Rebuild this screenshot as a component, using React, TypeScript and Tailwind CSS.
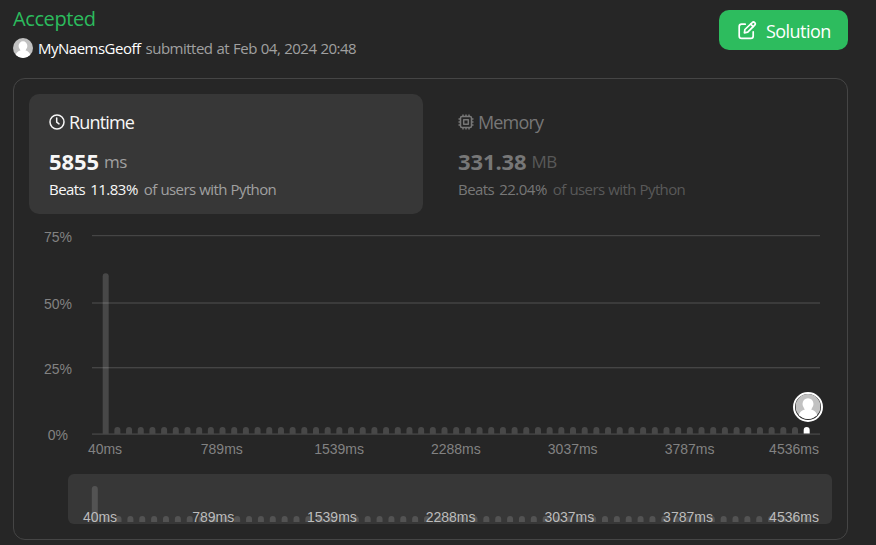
import React from "react";

const TICKS = ["40ms", "789ms", "1539ms", "2288ms", "3037ms", "3787ms", "4536ms"];
const BUCKETS = Array.from({ length: 61 }, (_, i) => i);

function Avatar({ className }: { className: string }) {
  return (
    <svg viewBox="0 0 20 20" className={className}>
      <defs>
        <clipPath id="avatar-clip">
          <circle cx="10" cy="10" r="10" />
        </clipPath>
      </defs>
      <g clipPath="url(#avatar-clip)">
        <rect width="20" height="20" fill="#c1c1c1" />
        <ellipse cx="10" cy="8" rx="4.4" ry="4.700" fill="#fff" />
        <path d="M2.200 20c0-5 2.600-6.800 5.200-7.600V10h5.200v2.400c2.600.8 5.200 2.600 5.200 7.600z" fill="#fff" />
      </g>
    </svg>
  );
}

function EditIcon() {
  return (
    <svg viewBox="0 0 20 20" className="h-5 w-5" fill="none" stroke="currentColor" strokeWidth="1.7" strokeLinecap="round" strokeLinejoin="round">
      <path d="M8.200 4.200H4.600A2.400 2.400 0 0 0 2.200 6.600V16A2.400 2.400 0 0 0 4.600 18.400h9.200a2.400 2.400 0 0 0 2.400-2.400V11.800" />
      <path d="M7.400 12.900l.5-3.400L15.200 2.600a1.750 1.750 0 0 1 2.500 2.500L10.700 12.200z" />
      <path d="M13.700 4.200l2.400 2.400" />
    </svg>
  );
}

function ClockIcon() {
  return (
    <svg viewBox="0 0 16 16" className="h-4 w-4" fill="none" stroke="currentColor" strokeWidth="1.500" strokeLinecap="round" strokeLinejoin="round">
      <circle cx="8" cy="8" r="7" />
      <path d="M7.700 4.100v4.100l2.300 1.700" />
    </svg>
  );
}

function ChipIcon() {
  return (
    <svg viewBox="0 0 16 16" className="h-4 w-4" fill="none" stroke="currentColor" strokeWidth="1.500" strokeLinejoin="round">
      <rect x="2.500" y="2.500" width="11" height="11" rx="1.500" />
      <rect x="5.700" y="5.700" width="4.600" height="4.600" />
      <path d="M5 2.500V.5M8 2.500V.5M11 2.500V.5M5 15.500v-2M8 15.500v-2M11 15.500v-2M.5 5h2M.5 8h2M.5 11h2M13.500 5h2M13.500 8h2M13.500 11h2" />
    </svg>
  );
}

const bar = (cx: number, top: number, bottom: number) =>
  `M${cx - 3} ${bottom}V${top + 3}a3 3 0 0 1 6 0V${bottom}z`;

function Distribution() {
  return (
    <svg viewBox="0 0 818 246" className="block h-[246px] w-[818px] font-['Liberation_Sans',sans-serif] text-[14px]">
      <g fill="#454545">
        <rect x="78" y="21" width="728" height="1.200" />
        <rect x="78" y="88.300" width="728" height="1.400" />
        <rect x="78" y="153" width="728" height="1.400" />
        <rect x="78" y="219.400" width="728" height="1.400" />
      </g>
      <g fill="#828282" textAnchor="end">
        <text x="58" y="28">75%</text>
        <text x="58" y="95">50%</text>
        <text x="58" y="160">25%</text>
        <text x="54" y="226">0%</text>
      </g>
      {BUCKETS.map((i) => (
        <path
          key={i}
          d={bar(91.7 + i * 11.683, i === 0 ? 59.3 : 213, 219.6)}
          fill="#fff"
          fillOpacity={i === 60 ? 1 : 0.16}
        />
      ))}
      <g fill="#828282" textAnchor="middle">
        {TICKS.map((t, i) => (
          <text key={t} x={i === 6 ? 780 : i < 2 ? 91 + i * 116.8 : 91.4 + i * 116.83} y="240">
            {t}
          </text>
        ))}
      </g>
    </svg>
  );
}

function RangePreview() {
  return (
    <svg viewBox="0 0 764 50" className="block h-[50px] w-[764px] font-['Liberation_Sans',sans-serif] text-[14px]">
      <rect width="764" height="50" rx="6" fill="#373737" />
      {BUCKETS.map((i) => (
        <path key={i} d={bar(26.8 + i * 11.865, i === 0 ? 12 : 42, 48)} fill="#535353" />
      ))}
      <g fill="#bcbcbc" textAnchor="middle">
        {TICKS.map((t, i) => (
          <text key={t} x={i === 0 ? 32 : i === 6 ? 726 : 26.5 + i * 118.7} y="48">
            {t}
          </text>
        ))}
      </g>
    </svg>
  );
}

type StatProps = {
  icon: React.ReactNode;
  title: string;
  value: string;
  unit: string;
  beats: string;
  active?: boolean;
};

function Stat({ icon, title, value, unit, beats, active = false }: StatProps) {
  const strong = active ? "text-[#f7f7f7]" : "text-[#777777]";
  const soft = active ? "text-[#a0a0a0]" : "text-[#595959]";
  return (
    <div className={`h-[120px] w-[394px] whitespace-nowrap rounded-[10px] pl-5 pt-[17px] ${active ? "bg-[#373737]" : ""}`}>
      <div className={`flex h-[22px] items-center gap-1 ${strong}`}>
        <span className="-mt-px">{icon}</span>
        <span className="text-[18px] leading-[22px] tracking-[-0.85px]">{title}</span>
      </div>
      <div className="mt-[14px] flex h-7 items-start gap-[5px]">
        <span className={`text-[22px] font-bold leading-7 tracking-[-0.1px] ${strong}`}>{value}</span>
        <span className={`text-[17px] leading-[30px] tracking-[-0.5px] ${soft}`}>{unit}</span>
      </div>
      <div className="mt-1 flex h-5 items-baseline text-[15px] leading-5">
        <span className={`tracking-[-0.55px] ${strong}`}>Beats</span>
        <span className={`ml-[5px] font-medium tracking-[-0.5px] ${strong}`}>{beats}</span>
        <span className={`ml-[6px] tracking-[-0.63px] [word-spacing:0.6px] ${soft}`}>of users with Python</span>
      </div>
    </div>
  );
}

export default function App() {
  return (
    <main className="h-[545px] w-[876px] overflow-hidden bg-[#262626] pl-[13px] font-['Open_Sans',sans-serif]">
      <header className="flex h-[78px] w-[835px] justify-between whitespace-nowrap">
        <div className="pt-[6px]">
          <h1 className="text-[20px] leading-[26px] tracking-[-0.4px] text-[#2cbb5d]">Accepted</h1>
          <div className="mt-[6px] flex h-5 items-center text-[15px] leading-5">
            <Avatar className="h-5 w-5" />
            <span className="ml-[5px] tracking-[-0.5px] text-white">MyNaemsGeoff</span>
            <span className="ml-[5px] tracking-[-0.5px] text-[#a0a0a0] [word-spacing:0.5px]">submitted at Feb 04, 2024 20:48</span>
          </div>
        </div>
        <button className="mt-[10px] flex h-10 w-[129px] items-center gap-[9px] rounded-[10px] bg-[#2dbc5e] pl-[18px] text-[18px] tracking-[-0.55px] text-white">
          <EditIcon />
          <span className="pt-[2px]">Solution</span>
        </button>
      </header>
      <section className="h-[462px] w-[835px] rounded-xl border border-[#454545] px-[15px] pt-[15px]">
        <div className="flex gap-[15px]">
          <Stat icon={<ClockIcon />} title="Runtime" value="5855" unit="ms" beats="11.83%" active />
          <Stat icon={<ChipIcon />} title="Memory" value="331.38" unit="MB" beats="22.04%" />
        </div>
        <div className="relative -ml-[15px] h-[246px]">
          <Distribution />
          <div className="absolute left-[779px] top-[178px] h-[30px] w-[30px] rounded-full border-2 border-white bg-[#262626]">
            <Avatar className="h-[25px] w-[26px]" />
          </div>
        </div>
        <div className="ml-[39px] mt-[14px]">
          <RangePreview />
        </div>
      </section>
    </main>
  );
}
